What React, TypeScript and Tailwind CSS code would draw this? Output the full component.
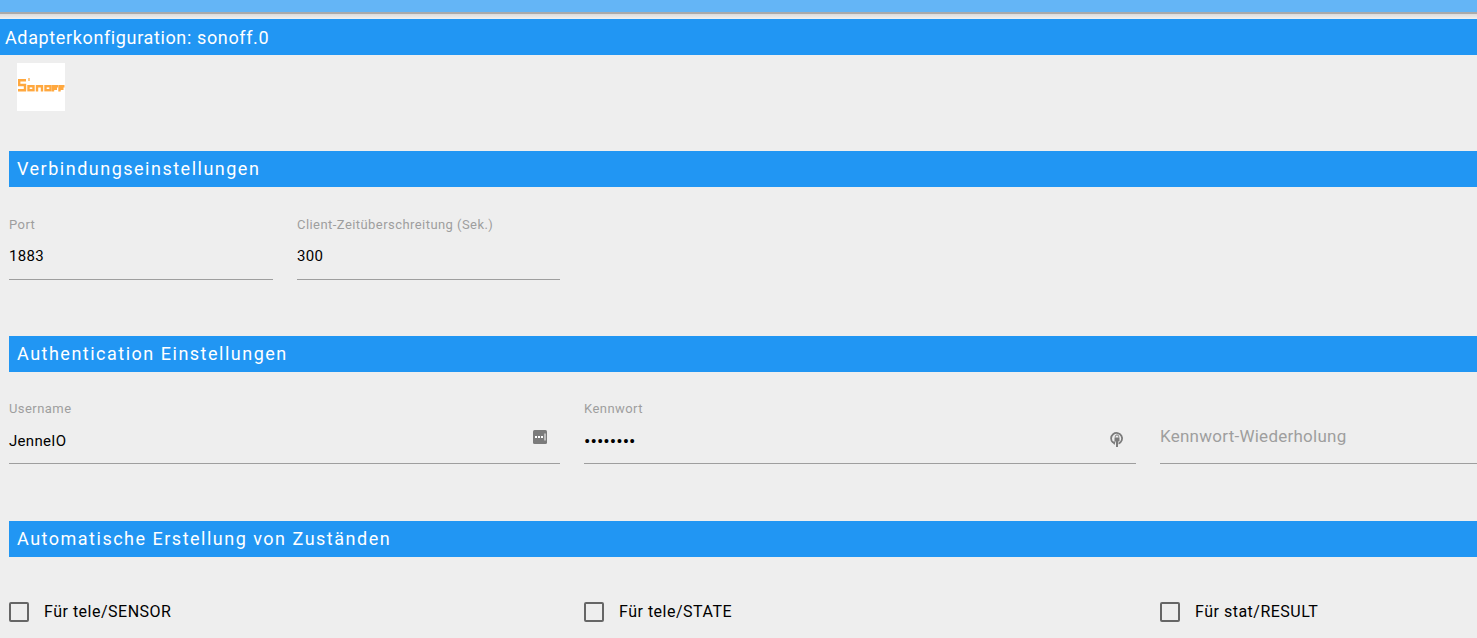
const sectionTitle = 'h-9 flex items-center pl-2 pb-[2px] bg-[#2196f3] text-white text-[18px] tracking-[1.5px]';
const label = 'text-[13px] leading-[14px] tracking-[0.44px] text-[#9e9e9e]';

function PasswordDots() {
  return (
    <svg width="14" height="14" viewBox="0 0 14 14" className="absolute right-[13px] top-[28px]" aria-hidden="true">
      <rect width="14" height="14" rx="1.5" fill="#7b7b7b" />
      <rect x="2" y="6" width="2" height="2" fill="#fff" />
      <rect x="5" y="6" width="2" height="2" fill="#fff" />
      <rect x="8" y="6" width="2" height="2" fill="#fff" />
      <rect x="11.5" y="3.5" width="1" height="7" fill="#fff" />
    </svg>
  );
}

function KeyIcon() {
  return (
    <svg width="14" height="16" viewBox="0 0 14 16" className="absolute right-[12px] top-[29px]" aria-hidden="true">
      <path d="M8.5 12.6A5.5 5.5 0 1 0 3 11.6" fill="none" stroke="#7b7b7b" strokeWidth="1.8" />
      <path d="M1.5 10.5L5.5 10.5L4.5 14z" fill="#7b7b7b" />
      <path d="M5.3 6.5V5.6a1.7 1.7 0 0 1 3.4 0V6.5" fill="none" stroke="#7b7b7b" strokeWidth="1" />
      <rect x="4.5" y="6.5" width="5" height="4" fill="#7b7b7b" />
      <rect x="6" y="10" width="2" height="6" fill="#7b7b7b" />
    </svg>
  );
}

function Field(props: { label: string; value?: string; placeholder?: string; secret?: boolean; short?: boolean; className: string; children?: React.ReactNode }) {
  return (
    <div className={`relative ${props.className}`}>
      <div className={`${label} h-[14px]`}>{props.label}</div>
      {props.placeholder ? (
        <div className="h-[47px] pt-[2px] flex items-center text-[17px] tracking-[0.25px] text-[#9e9e9e] -mt-1 mb-1">{props.placeholder}</div>
      ) : props.secret ? (
        <div className="h-[47px] pt-[4px] flex items-center text-[19px] leading-none tracking-[0.03px] text-black">{props.value}</div>
      ) : (
        <div className={`h-[47px] flex items-center text-[15px] tracking-[0.3px] text-black ${props.short ? 'pt-[1px]' : 'pt-[3px]'}`}>{props.value}</div>
      )}
      {props.children}
      <div className="h-px bg-[#9e9e9e]" />
    </div>
  );
}

function Check(props: { label: string; className: string }) {
  return (
    <div className={`flex items-center ${props.className}`}>
      <div className="w-5 h-5 shrink-0 rounded-[2px] border-2 border-[#666666]" />
      <span className="ml-[15px] text-[16px] tracking-[0.5px] text-black">{props.label}</span>
    </div>
  );
}

export default function App() {
  return (
    <div className="h-[638px] w-[1477px] overflow-hidden bg-[#eeeeee] font-['Roboto',sans-serif]">
      <div className="h-3 bg-[#64b5f6]" />
      <div className="h-[2px] bg-[#aaaaaa]" />
      <div className="h-[5px] bg-gradient-to-b from-[#dcdcdc] to-[#f0f0f0]" />
      <div className="h-9 flex items-center pl-[5px] bg-[#2196f3] text-white text-[18px] tracking-[0.63px]">Adapterkonfiguration: sonoff.0</div>

      <div className="pl-[17px] pt-2">
        <div className="w-12 h-12 bg-white">
          <svg width="48" height="48" viewBox="0 0 48 48" aria-hidden="true">
            <g fill="none" stroke="#ffa83f" strokeWidth="2.4">
              <path d="M9 17.2H2.2V22H8V27.2H1" />
              <rect x="11.5" y="23.2" width="5" height="4" />
              <path d="M20 28.4V23.2H25V28.4" />
              <rect x="28.5" y="23.2" width="5" height="4" />
              <path d="M36 28.4V23.2H41M36 25.8H40M42.5 28.4V23.2H47.5M42.5 25.8H46.5" />
            </g>
            <rect x="11" y="15" width="2" height="3" fill="#ffc98a" />
          </svg>
        </div>
      </div>

      <div className="pl-[9px] pt-10">
        <div className={sectionTitle}>Verbindungseinstellungen</div>
        <div className="flex gap-6 pt-[31px]">
          <Field label="Port" value="1883" short className="w-[264px]" />
          <Field label="Client-Zeitüberschreitung (Sek.)" value="300" short className="w-[263px]" />
        </div>

        <div className={`${sectionTitle} mt-14`}>Authentication Einstellungen</div>
        <div className="flex gap-6 pt-[30px]">
          <Field label="Username" value="JenneIO" className="w-[551px]">
            <PasswordDots />
          </Field>
          <Field label="Kennwort" value="••••••••" secret className="w-[552px]">
            <KeyIcon />
          </Field>
          <Field label="" placeholder="Kennwort-Wiederholung" className="w-[317px]" />
        </div>

        <div className={`${sectionTitle} mt-[57px]`}>Automatische Erstellung von Zuständen</div>
        <div className="flex gap-6 pt-[43px]">
          <Check label="Für tele/SENSOR" className="w-[551px]" />
          <Check label="Für tele/STATE" className="w-[552px]" />
          <Check label="Für stat/RESULT" className="w-[300px]" />
        </div>
      </div>
    </div>
  );
}
